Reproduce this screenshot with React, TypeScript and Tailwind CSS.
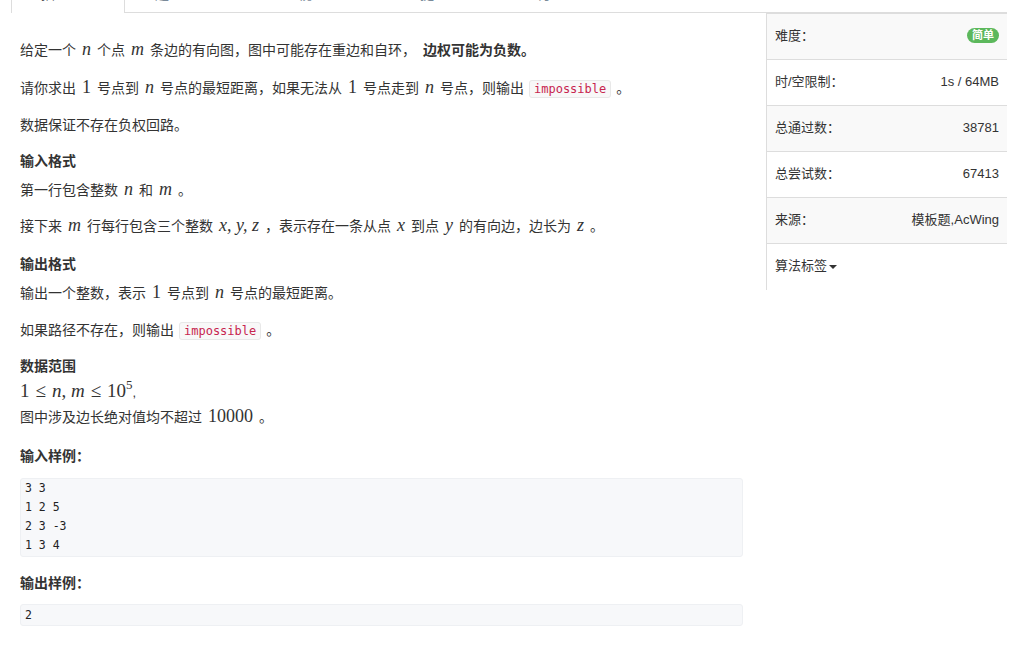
import React from 'react'

const sans = "font-['Liberation_Sans','Noto_Sans_CJK_SC',sans-serif]"
const mono = "font-['DejaVu_Sans_Mono','Liberation_Mono',monospace]"

// inline math, KaTeX-like
function M({ children }: { children: React.ReactNode }) {
  return (
    <span className="font-['Liberation_Serif',serif] italic text-[18px] leading-none px-[6px]">
      {children}
    </span>
  )
}

function N({ children }: { children: React.ReactNode }) {
  return (
    <span className="font-['Liberation_Serif',serif] text-[18px] leading-none px-[6px]">
      {children}
    </span>
  )
}

function Code({ children }: { children: React.ReactNode }) {
  return (
    <code
      className={`${mono} text-[12px] leading-[15px] text-[#c7254e] bg-[#f8f8f8] border border-[#e8e8e8] rounded-[3px] px-[4px] py-[1px] mx-[5px]`}
    >
      {children}
    </code>
  )
}

// tabs scrolled out of view: only the bottom pixels of their labels show
const tabs = [
  { label: '题', cls: 'w-[130px] pl-[30px]' },
  { label: '视', cls: 'w-[135px] pl-[43px]' },
  { label: '提', cls: 'w-[117px] pl-[30px]' },
  { label: '讨', cls: 'w-[113px] pl-[30px]' },
]

const info = [
  { label: '难度：', value: null },
  { label: '时/空限制：', value: '1s / 64MB' },
  { label: '总通过数：', value: '38781' },
  { label: '总尝试数：', value: '67413' },
  { label: '来源：', value: '模板题,AcWing' },
]

export default function App() {
  return (
    <div className={`w-[1016px] h-[662px] bg-white overflow-hidden text-[#333] ${sans}`}>
      {/* Tabs */}
      <div className="h-[13px] flex overflow-hidden">
        <div className="w-[11px] shrink-0"></div>
        <div className="w-[114px] shrink-0 h-[13px] border-l border-r border-[#ddd] pl-[29px]">
          <div className="-mt-[16px] leading-[20px] text-[14px] text-[#555]">描</div>
        </div>
        {tabs.map((t) => (
          <div key={t.label} className={`${t.cls} shrink-0 h-[13px] border-b border-[#ddd]`}>
            <div className="-mt-[16px] leading-[20px] text-[14px] text-[#7a8a99]">{t.label}</div>
          </div>
        ))}
        <div className="flex-1 h-[13px] border-b border-[#ddd] mr-[9px]"></div>
      </div>

      <div className="flex">
        {/* Problem body */}
        <div className="w-[766px] pl-[20px] pr-[23px] pt-[27px] text-[14px]">
          <p className="leading-[20px]">
            给定一个<M>n</M>个点<M>m</M>条边的有向图，图中可能存在重边和自环，
            <strong className="font-bold ml-[7px]">边权可能为负数。</strong>
          </p>
          <p className="leading-[20px] mt-[18px]">
            请你求出<N>1</N>号点到<M>n</M>号点的最短距离，如果无法从<N>1</N>号点走到<M>n</M>号点，则输出
            <Code>impossible</Code>。
          </p>
          <p className="leading-[20px] mt-[17px]">数据保证不存在负权回路。</p>

          <h4 className="leading-[20px] mt-[16px] font-bold">输入格式</h4>
          <p className="leading-[20px] mt-[9px]">
            第一行包含整数<M>n</M>和<M>m</M>。
          </p>
          <p className="leading-[20px] mt-[16px]">
            接下来<M>m</M>行每行包含三个整数<M>x,&nbsp;y,&nbsp;z</M>，表示存在一条从点<M>x</M>到点<M>y</M>的有向边，边长为<M>z</M>。
          </p>

          <h4 className="leading-[20px] mt-[18px] font-bold">输出格式</h4>
          <p className="leading-[20px] mt-[9px]">
            输出一个整数，表示<N>1</N>号点到<M>n</M>号点的最短距离。
          </p>
          <p className="leading-[20px] mt-[17px]">
            如果路径不存在，则输出<Code>impossible</Code>。
          </p>

          <h4 className="leading-[20px] mt-[16px] font-bold">数据范围</h4>
          <p className="leading-[22px] mt-[5px]">
            <span className="font-['Liberation_Serif',serif] text-[19px] leading-none">
              1<span className="mx-[6px]">≤</span>
              <i>n</i>,&nbsp;<i>m</i>
              <span className="mx-[6px]">≤</span>10
              <sup className="text-[13px] -top-[8px]">5</sup>
            </span>
            <span className="text-[13px]">,</span>
          </p>
          <p className="leading-[20px] mt-[3px]">
            图中涉及边长绝对值均不超过<N>10000</N>。
          </p>

          <h4 className="leading-[20px] mt-[19px] font-bold">输入样例：</h4>
          <pre
            className={`${mono} mt-[12px] text-[11.5px] leading-[19px] pl-[4px] pb-[1px] bg-[#f7f8fa] border border-[#eef0f3] rounded-[3px] text-[#222]`}
          >
            {'3 3\n1 2 5\n2 3 -3\n1 3 4'}
          </pre>

          <h4 className="leading-[20px] mt-[16px] font-bold">输出样例：</h4>
          <pre
            className={`${mono} mt-[11px] text-[11.5px] leading-[19px] pl-[4px] pt-[1px] bg-[#f7f8fa] border border-[#eef0f3] rounded-[3px] text-[#222]`}
          >
            {'2'}
          </pre>
        </div>

        {/* Info sidebar */}
        <div className="w-[241px] border-l border-t border-[#ddd] text-[13px] self-start">
          {info.map((row, i) => (
            <div
              key={row.label}
              className={`h-[46px] flex items-center justify-between px-[8px] pb-[2px] border-b border-[#ddd] ${
                i % 2 === 0 ? 'bg-[#f9f9f9]' : 'bg-white'
              }`}
            >
              <span>{row.label}</span>
              {row.value === null ? (
                <span className="bg-[#5cb85c] text-white text-[11px] font-bold leading-[15px] px-[5px] rounded-full">
                  简单
                </span>
              ) : (
                <span>{row.value}</span>
              )}
            </div>
          ))}
          <div className="h-[46px] flex items-center px-[8px] pb-[2px]">
            <span>算法标签</span>
            <span className="ml-[2px] mt-[2px] w-0 h-0 border-l-[4px] border-r-[4px] border-t-[4px] border-l-transparent border-r-transparent border-t-[#333]"></span>
          </div>
        </div>
      </div>
    </div>
  )
}
